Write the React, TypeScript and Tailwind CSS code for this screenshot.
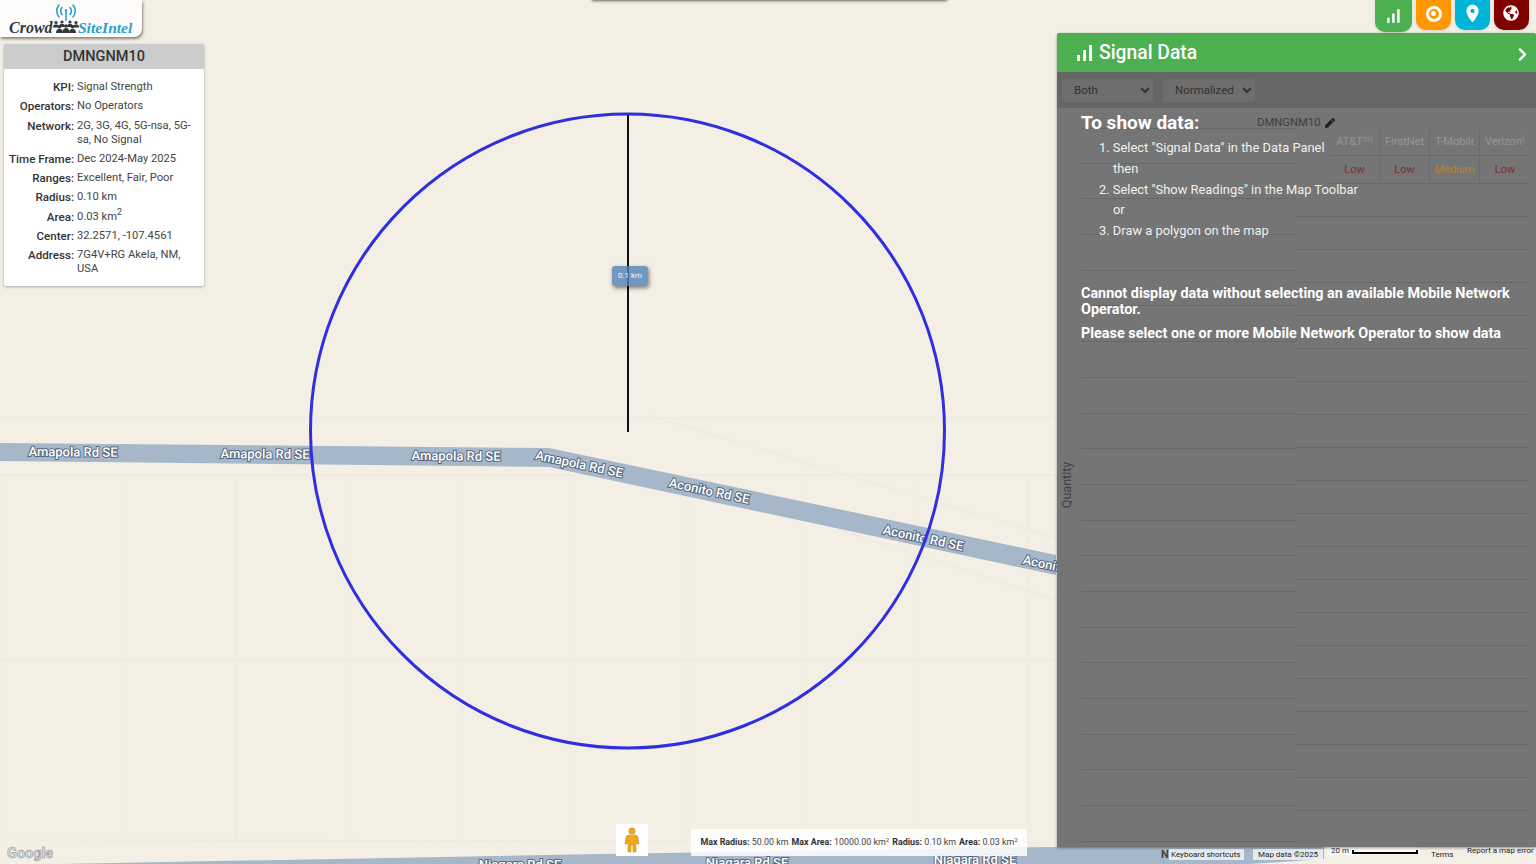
import { FaChevronRight, FaGlobeAmericas, FaPen } from 'react-icons/fa';
import { MdLocationOn, MdSignalCellularAlt } from 'react-icons/md';

const INFO = [
  { label: 'KPI:', value: 'Signal Strength' },
  { label: 'Operators:', value: 'No Operators' },
  { label: 'Network:', value: '2G, 3G, 4G, 5G-nsa, 5G-sa, No Signal' },
  { label: 'Time Frame:', value: 'Dec 2024-May 2025' },
  { label: 'Ranges:', value: 'Excellent, Fair, Poor' },
  { label: 'Radius:', value: '0.10 km' },
  { label: 'Area:', value: <>0.03 km<sup className="text-[9px]">2</sup></> },
  { label: 'Center:', value: '32.2571, -107.4561' },
  { label: 'Address:', value: '7G4V+RG Akela, NM, USA' },
];

const OPERATORS = [
  { name: <>AT&T<sup className="text-[8px]">(n)</sup></>, level: 'Low', color: 'text-[#852e2e]' },
  { name: 'FirstNet', level: 'Low', color: 'text-[#852e2e]' },
  { name: 'T-Mobile', level: 'Medium', color: 'text-[#b5822f]' },
  { name: <>Verizon<sup className="text-[8px]">(n)</sup></>, level: 'Low', color: 'text-[#852e2e]' },
];

const ROAD_LABELS = [
  { text: 'Amapola Rd SE', x: 73, y: 453, angle: 0.6 },
  { text: 'Amapola Rd SE', x: 265, y: 455, angle: 0.6 },
  { text: 'Amapola Rd SE', x: 456, y: 457, angle: 0.6 },
  { text: 'Amapola Rd SE', x: 579, y: 465, angle: 12 },
  { text: 'Aconito Rd SE', x: 709, y: 492, angle: 12 },
  { text: 'Aconito Rd SE', x: 923, y: 539, angle: 12 },
  { text: 'Aconito Rd SE', x: 1063, y: 569, angle: 12 },
  { text: 'Niagara Rd SE', x: 520, y: 866, angle: 0 },
  { text: 'Niagara Rd SE', x: 747, y: 864, angle: 0 },
  { text: 'Niagara Rd SE', x: 975, y: 861, angle: 0 },
];

const GRID_X = [5, 123, 236, 349, 462, 575, 688, 801, 915, 1028];

function MapCanvas() {
  return (
    <svg className="absolute inset-0" width="1536" height="864" viewBox="0 0 1536 864">
      {GRID_X.map(x => (
        <g key={x} stroke="#efeadf" strokeWidth="1">
          <line x1={x} y1="476" x2={x} y2="658" />
          <line x1={x} y1="662" x2={x} y2="840" />
        </g>
      ))}
      <g stroke="#efeadf" strokeWidth="1.5" fill="none">
        <line x1="0" y1="418" x2="1056" y2="418" />
        <line x1="0" y1="475" x2="1056" y2="475" />
        <line x1="0" y1="660" x2="1056" y2="660" />
        <line x1="0" y1="840" x2="1056" y2="842" />
        <line x1="650" y1="416" x2="1056" y2="538" />
        <line x1="840" y1="530" x2="1056" y2="600" />
      </g>
      <polygon points="0,443 549,448 1056,555 1056,575 549,467 0,461" fill="#a6b7ca" />
      <polygon points="60,864 600,854 1056,847 1324,847 1324,859 1250,864" fill="#a6b7ca" />
      {ROAD_LABELS.map((l, i) => (
        <text
          key={i}
          x={l.x}
          y={l.y}
          transform={`rotate(${l.angle} ${l.x} ${l.y})`}
          textAnchor="middle"
          dominantBaseline="middle"
          fontFamily="Roboto, sans-serif"
          fontWeight="500"
          fontSize="13"
          fill="#ffffff"
          stroke="#55667e"
          strokeWidth="2"
          paintOrder="stroke"
        >
          {l.text}
        </text>
      ))}
      <circle cx="627.5" cy="431" r="317" fill="none" stroke="#2f2fe0" strokeWidth="3" />
      <line x1="628" y1="115" x2="628" y2="432" stroke="#111111" strokeWidth="2" />
    </svg>
  );
}

function Logo() {
  return (
    <div className="absolute left-0 top-0 w-[142px] h-[37px] bg-[#fdfcfa] rounded-br-lg shadow-[1px_2px_3px_rgba(0,0,0,0.45)]">
      <svg className="absolute left-[55px] top-[4px]" width="22" height="17" viewBox="0 0 22 17" fill="none" stroke="#1f9fcf" strokeWidth="1.5" strokeLinecap="round">
        <path d="M4 1C1 4.500 1 9.500 4 13" />
        <path d="M7 3.500C5.400 5.500 5.400 8.500 7 10.500" />
        <path d="M18 1C21 4.500 21 9.500 18 13" />
        <path d="M15 3.500C16.600 5.500 16.600 8.500 15 10.500" />
        <circle cx="11" cy="6.500" r="1.300" fill="#1f9fcf" stroke="none" />
        <path d="M11 8V16.500" />
      </svg>
      <svg className="absolute left-[53px] top-[20px]" width="26" height="13" viewBox="0 0 26 13" fill="#33373b">
        <circle cx="3" cy="2.500" r="1.600" />
        <circle cx="9" cy="2" r="1.600" />
        <circle cx="17" cy="2" r="1.600" />
        <circle cx="23" cy="2.500" r="1.600" />
        <path d="M0 7.500C0 5 1.500 4.500 3 4.500C4.500 4.500 6 5 6 7.500Z" />
        <path d="M6 7C6 4.500 7.500 4 9 4C10.500 4 12 4.500 12 7Z" />
        <path d="M14 7C14 4.500 15.500 4 17 4C18.500 4 20 4.500 20 7Z" />
        <path d="M20 7.500C20 5 21.500 4.500 23 4.500C24.500 4.500 26 5 26 7.500Z" />
        <circle cx="6.500" cy="6.800" r="1.700" />
        <circle cx="13" cy="6" r="1.800" />
        <circle cx="19.500" cy="6.800" r="1.700" />
        <path d="M3 13C3 10 4.500 8.800 6.500 8.800C8.500 8.800 10 10 10 13Z" />
        <path d="M9.500 13C9.500 9.500 11 8 13 8C15 8 16.500 9.500 16.500 13Z" />
        <path d="M16 13C16 10 17.500 8.800 19.500 8.800C21.500 8.800 23 10 23 13Z" />
      </svg>
      <span className="absolute left-[9px] top-[19px] font-['Liberation_Serif',serif] italic font-bold text-[16px] leading-[18px] text-[#33373b]">Crowd</span>
      <span className="absolute left-[78px] top-[19px] font-['Liberation_Serif',serif] italic font-bold text-[15.5px] leading-[18px] text-[#2a9fd0]">SiteIntel</span>
    </div>
  );
}

function InfoCard() {
  return (
    <div className="absolute left-1 top-11 w-[200px] bg-white shadow-[0_1px_3px_rgba(0,0,0,0.3)] rounded-[2px]">
      <div className="h-[25px] pt-[1px] bg-[#cccccc] text-[#333333] text-[14.5px] font-medium flex items-center justify-center">DMNGNM10</div>
      <div className="grid grid-cols-[70px_1fr] gap-x-[3px] gap-y-[5.300px] pt-[11px] pb-[10px] pr-[8px] text-[11.200px] leading-[14px] text-[#444444]">
        {INFO.map(row => (
          <div key={row.label} className="contents">
            <span className="text-right text-[11.600px] font-medium text-[#333333] whitespace-nowrap">{row.label}</span>
            <span>{row.value}</span>
          </div>
        ))}
      </div>
    </div>
  );
}

function ChartBackdrop() {
  return (
    <div className="absolute inset-0 flex">
      <div className="ml-6 w-[215px] pt-5 shrink-0">
        {Array.from({ length: 20 }).map((_, i) => (
          <div key={i} className={`h-[35.7px] border-b border-[#686868] ${i === 0 ? 'border-t' : ''}`} />
        ))}
      </div>
      <div className="flex-1 pr-[6px] relative">
        <div className="absolute left-[-39px] top-[8px] flex items-center gap-[4px] text-[11.300px] leading-[14px] text-[#3f3f3f]">
          DMNGNM10
          <FaPen size={10} className="text-[#222222]" />
        </div>
        <div className="ml-[34px] mt-5">
          <div className="grid grid-cols-4 h-[27px] pt-[1px] text-[11px] text-[#959595]">
            {OPERATORS.map((op, i) => (
              <div key={i} className="flex items-center justify-center border-r last:border-r-0 border-[#6b6b6b] px-[5px] overflow-hidden whitespace-nowrap">
                <span className="overflow-hidden">{op.name}</span>
              </div>
            ))}
          </div>
          <div className="grid grid-cols-4 h-[29px] border-t border-b border-[#686868] text-[11px]">
            {OPERATORS.map((op, i) => (
              <div key={i} className={`flex items-center justify-center pt-[2px] border-r last:border-r-0 border-[#6b6b6b] ${op.color}`}>{op.level}</div>
            ))}
          </div>
        </div>
        {Array.from({ length: 19 }).map((_, i) => (
          <div key={i} className="h-[33px] border-b border-[#686868]" />
        ))}
      </div>
      <span className="absolute left-[3px] top-[377px] w-[14px] h-[0] flex items-center justify-center -rotate-90 text-[12.500px] text-[#3f3f3f] whitespace-nowrap">Quantity</span>
    </div>
  );
}

function SignalPanel() {
  return (
    <div className="absolute left-[1057px] top-[33px] w-[479px] h-[814px] flex flex-col bg-[#757575] rounded-t-[3px] shadow-[0_1px_3px_rgba(0,0,0,0.4)] overflow-hidden">
      <div className="h-[39px] shrink-0 bg-[#4caf50] text-white flex items-center pl-4 pr-[6px]">
        <MdSignalCellularAlt size={24} className="mr-[3px] -ml-[1px]" />
        <span className="text-[19.300px] font-medium pt-[2px]">Signal Data</span>
        <FaChevronRight size={15} className="ml-auto mt-[4px]" />
      </div>
      <div className="h-[36px] shrink-0 bg-[#666666] flex items-center gap-[10px] pl-[5px]">
        <select className="w-[91px] h-[23px] pl-2 rounded-[3px] bg-[#6e6e6e] text-[11.500px] text-[#333333]" defaultValue="Both">
          <option>Both</option>
        </select>
        <select className="w-[92px] h-[23px] pl-2 rounded-[3px] bg-[#6e6e6e] text-[11.500px] text-[#333333]" defaultValue="Normalized">
          <option>Normalized</option>
        </select>
      </div>
      <div className="relative flex-1">
        <ChartBackdrop />
        <div className="absolute inset-0 pl-6 pr-6 pt-[3px] text-white">
          <h3 className="text-[19px] leading-[24px] font-bold">To show data:</h3>
          <ol className="mt-[3px] text-[12.900px] leading-[20.800px] text-[#f0f0f0]">
            <li className="pl-8 -indent-[14px]">1. Select "Signal Data" in the Data Panel</li>
            <li className="pl-8">then</li>
            <li className="pl-8 -indent-[14px]">2. Select "Show Readings" in the Map Toolbar</li>
            <li className="pl-8">or</li>
            <li className="pl-8 -indent-[14px]">3. Draw a polygon on the map</li>
          </ol>
          <p className="mt-[44px] text-[14.400px] leading-[16px] font-bold">Cannot display data without selecting an available Mobile Network Operator.</p>
          <p className="mt-2 text-[14.400px] leading-[16px] font-bold">Please select one or more Mobile Network Operator to show data</p>
        </div>
      </div>
    </div>
  );
}

function Toolbar() {
  return (
    <div className="absolute left-[1375px] top-0 flex items-start gap-1">
      <div className="w-[37px] h-[32px] bg-[#4caf50] rounded-b-[10px] flex items-center justify-center pr-[1px] text-white shadow-sm">
        <MdSignalCellularAlt size={20} />
      </div>
      <div className="w-[35px] h-[30px] bg-[#ff9800] rounded-b-[10px] flex items-center justify-center pb-[3px] shadow-sm">
        <div className="w-[16px] h-[16px] rounded-full border-[3px] border-white flex items-center justify-center">
          <div className="w-[5px] h-[5px] rounded-full bg-white" />
        </div>
      </div>
      <div className="w-[35px] h-[30px] bg-[#00b4d8] rounded-b-[10px] flex items-center justify-center pb-[4px] text-white shadow-sm">
        <MdLocationOn size={21} />
      </div>
      <div className="w-[35px] h-[30px] bg-[#800000] rounded-b-[10px] flex items-center justify-center pb-[4px] pr-[2px] text-white shadow-sm">
        <FaGlobeAmericas size={16} />
      </div>
    </div>
  );
}

function MapFooter() {
  return (
    <div className="absolute inset-0 font-['Roboto',sans-serif] pointer-events-none">
      <span className="absolute left-[7px] top-[845px] text-[14.500px] leading-[17px] font-bold text-[#dcdcdc] [-webkit-text-stroke:0.5px_#8a8a8a]">Google</span>
      <div className="absolute left-[616px] top-[824px] w-8 h-8 bg-white flex items-center justify-center">
        <svg width="16" height="26" viewBox="0 0 16 26" fill="#f0a81e" stroke="#c98a10" strokeWidth="0.5">
          <circle cx="8" cy="4" r="3.2" />
          <path d="M5 8H11C13 8 14 9 14 10.500L15 17H13L12 13V25H9V18H7V25H4V13L3 17H1L2 10.500C2 9 3 8 5 8Z" />
        </svg>
      </div>
      <div className="absolute left-[691px] top-[829px] w-[336px] h-[27px] bg-white/85 flex items-center justify-center text-[8.900px] text-[#444444] whitespace-nowrap gap-[3px]">
        <span><b className="font-bold text-[#333333]">Max Radius:</b> 50.00 km</span>
        <span><b className="font-bold text-[#333333]">Max Area:</b> 10000.00 km<sup className="text-[6px]">2</sup></span>
        <span><b className="font-bold text-[#333333]">Radius:</b> 0.10 km</span>
        <span><b className="font-bold text-[#333333]">Area:</b> 0.03 km<sup className="text-[6px]">2</sup></span>
      </div>
      <span className="absolute left-[1161px] top-[848px] text-[11px] leading-[13px] font-bold text-[#444444]">N</span>
      <div className="absolute left-[1169px] top-[849px] w-[75px] h-[11px] bg-white/70 text-[8px] leading-[11px] pl-[2px] text-[#222222] whitespace-nowrap">Keyboard shortcuts</div>
      <div className="absolute left-[1253px] top-[849px] w-[70px] h-[11px] bg-white/70 text-[8px] leading-[11px] text-center text-[#222222] whitespace-nowrap">Map data ©2025</div>
      <div className="absolute left-[1327px] top-[846px] w-[93px] h-[9px] bg-white/70 text-[8px] leading-[9px] pl-1 text-[#222222]">20 m</div>
      <div className="absolute left-[1352px] top-[850px] w-[66px] h-[4px] border-2 border-t-0 border-black" />
      <div className="absolute left-[1431px] top-[849px] text-[8px] leading-[11px] text-[#222222]">Terms</div>
      <div className="absolute left-[1467px] top-[846px] text-[8px] leading-[10px] text-[#222222] whitespace-nowrap">Report a map error</div>
    </div>
  );
}

export default function App() {
  return (
    <div className="relative w-full h-[864px] overflow-hidden bg-[#f4efe4] font-['Roboto',sans-serif]">
      <MapCanvas />
      <div className="absolute left-[592px] -top-[6px] w-[355px] h-[6px] bg-white shadow-[0_1px_3px_rgba(0,0,0,0.6)]" />
      <Logo />
      <InfoCard />
      <div className="absolute left-[612px] top-[266px] w-9 h-5 rounded-[3px] bg-[#4f82b8]/80 shadow-[1px_2px_4px_rgba(0,0,0,0.5)] text-[8px] leading-5 text-center text-white/90">0.1 km</div>
      <MapFooter />
      <SignalPanel />
      <Toolbar />
    </div>
  );
}
